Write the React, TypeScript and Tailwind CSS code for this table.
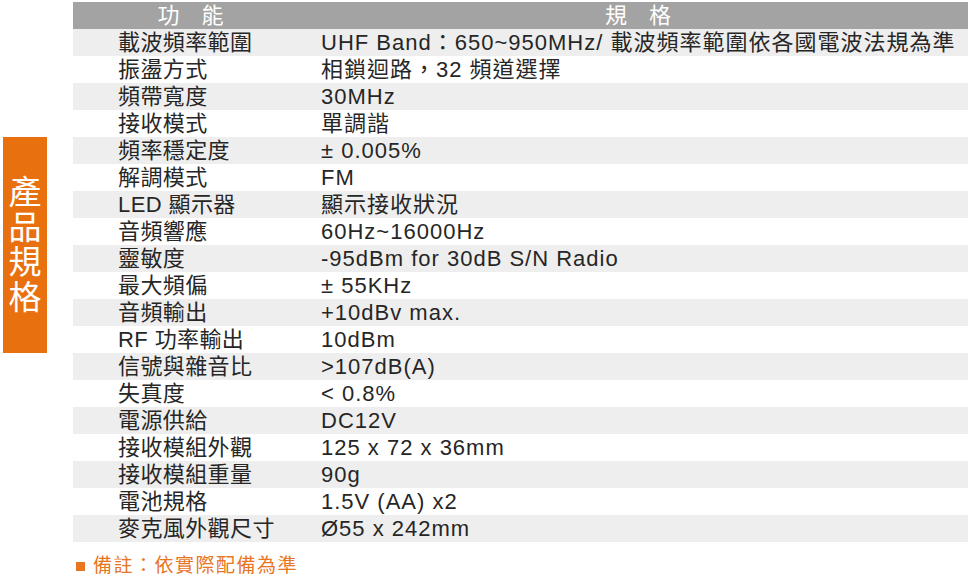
const specs: [string, string][] = [
  ['載波頻率範圍', 'UHF Band：650~950MHz/ 載波頻率範圍依各國電波法規為準'],
  ['振盪方式', '相鎖迴路，32 頻道選擇'],
  ['頻帶寬度', '30MHz'],
  ['接收模式', '單調諧'],
  ['頻率穩定度', '± 0.005%'],
  ['解調模式', 'FM'],
  ['LED 顯示器', '顯示接收狀況'],
  ['音頻響應', '60Hz~16000Hz'],
  ['靈敏度', '-95dBm for 30dB S/N Radio'],
  ['最大頻偏', '± 55KHz'],
  ['音頻輸出', '+10dBv max.'],
  ['RF 功率輸出', '10dBm'],
  ['信號與雜音比', '>107dB(A)'],
  ['失真度', '< 0.8%'],
  ['電源供給', 'DC12V'],
  ['接收模組外觀', '125 x 72 x 36mm'],
  ['接收模組重量', '90g'],
  ['電池規格', '1.5V (AA) x2'],
  ['麥克風外觀尺寸', 'Ø55 x 242mm'],
]

export default function App() {
  return (
    <div
      className="w-[968px] h-[578px] bg-white overflow-hidden flex pt-[2px] text-[#262626]"
      style={{ fontFamily: '"Liberation Sans", "Noto Sans CJK TC", sans-serif' }}
    >
      {/* 左側標籤 */}
      <div className="w-[73px] shrink-0 pl-[3px] pt-[135px]">
        <div className="w-[44px] h-[216px] bg-[#e8700f] flex items-center justify-center">
          <span className="block w-[34px] text-center break-all text-white text-[33px] leading-[35px]">產品規格</span>
        </div>
      </div>

      <div className="flex-1 flex flex-col">
        <div className="grid grid-cols-[235px_1fr] text-[22px]">
          <div className="h-[27px] bg-[#a3a3a3] text-white flex items-center justify-center leading-none">功　能</div>
          <div className="h-[27px] bg-[#a3a3a3] text-white flex items-center justify-center leading-none">規　格</div>
          {specs.map(([k, v], i) => (
            <div key={k} className="contents">
              <div className={`h-[27px] flex items-center pl-[45px] leading-none whitespace-nowrap tracking-[0.4px] ${i % 2 === 0 ? 'bg-[#eeeeee]' : 'bg-white'}`}>
                {k}
              </div>
              <div className={`h-[27px] flex items-center pl-[13px] leading-none whitespace-nowrap tracking-[1px] ${i % 2 === 0 ? 'bg-[#eeeeee]' : 'bg-white'}`}>
                {v}
              </div>
            </div>
          ))}
        </div>

        <div className="flex items-center gap-[8px] mt-[10px] pl-[3px] text-[#e8751f] text-[19px] tracking-[1.5px]">
          <span className="w-[9px] h-[9px] bg-[#e8751f]" />
          <span>備註：依實際配備為準</span>
        </div>
      </div>
    </div>
  )
}
